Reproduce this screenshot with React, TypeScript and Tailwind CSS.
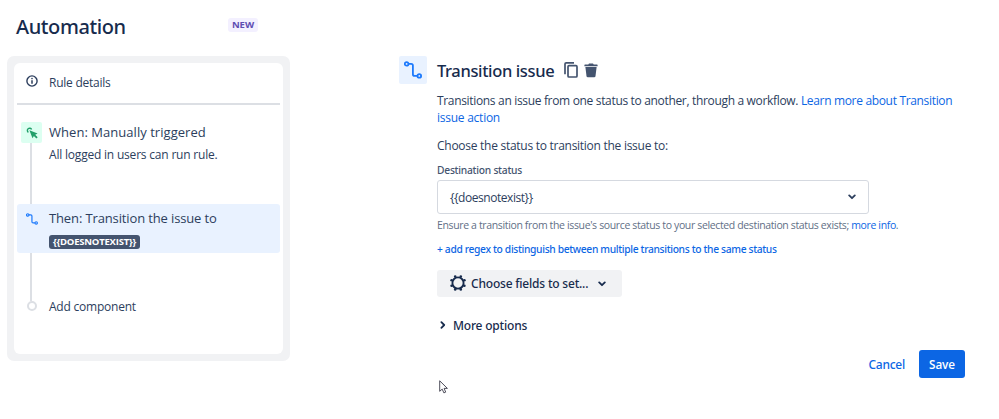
import React from 'react';

function TransitionIcon({ className }: { className: string }) {
  return (
    <svg viewBox="0 0 18 18" fill="none" stroke="#1d7afc" strokeWidth="1.8" className={className}>
      <circle cx="2.6" cy="2.9" r="1.8" />
      <path d="M4.4 2.9H7.2Q8.9 2.9 8.9 4.6V13.2Q8.9 14.9 10.6 14.9H13.4" />
      <circle cx="15.3" cy="14.9" r="1.8" />
    </svg>
  );
}

function Chevron({ className }: { className: string }) {
  return (
    <svg viewBox="0 0 8 6" fill="none" stroke="currentColor" strokeWidth="1.8" strokeLinecap="round" strokeLinejoin="round" className={className}>
      <path d="M1.2 1.4L4 4.2L6.8 1.4" />
    </svg>
  );
}

function RulePanel() {
  return (
    <div className="w-[283px] h-[305px] ml-[7px] rounded-[7px] bg-[#f1f2f4] p-[7px]">
      <div className="h-full rounded-[6px] bg-white px-[3px]">
        {/* Rule details */}
        <div className="flex h-[42px] items-center border-b-2 border-[#dcdfe4] pl-[9px]">
          <svg viewBox="0 0 12 12" className="mt-[-4px] h-3 w-3" fill="none" stroke="#2c3e5d">
            <circle cx="6" cy="6" r="5.1" strokeWidth="1.4" />
            <path d="M6 5.3V8.7" strokeWidth="1.5" />
            <circle cx="6" cy="3.6" r="0.8" fill="#2c3e5d" stroke="none" />
          </svg>
          <span className="ml-[11px] mt-[-1px] text-[12px] tracking-[-0.24px]">Rule details</span>
        </div>

        {/* Trigger */}
        <div className="flex h-[99px] pl-1 pt-[17px]">
          <div className="flex w-[21px] flex-col">
            <div className="flex h-[21px] w-[21px] shrink-0 items-center justify-center rounded-[2px] bg-[#dcfff1]">
              <svg viewBox="0 0 12 12" className="h-3 w-3">
                <path d="M2.4 5.3A2.2 2.2 0 1 1 5.6 2.6" fill="none" stroke="#22a06b" strokeWidth="1.4" />
                <path d="M3.4 3.3L11.6 6.4L9.2 7.7L11.7 10.2L10.4 11.5L7.9 9L6.5 11.3Z" fill="#22a06b" />
              </svg>
            </div>
            <div className="ml-[9px] w-[2px] flex-1 bg-[#dcdfe4]" />
          </div>
          <div className="ml-[7px] whitespace-nowrap">
            <div className="h-5 text-[13px] leading-5 tracking-[0.04px]">When: Manually triggered</div>
            <div className="mt-[2px] h-5 text-[12px] leading-[21px] tracking-[-0.2px]">All logged in users can run rule.</div>
          </div>
        </div>

        {/* Selected action */}
        <div className="flex h-[49px] rounded-[3px] bg-[#e9f2ff] pl-[9px]">
          <TransitionIcon className="mt-[9px] h-3 w-3" />
          <div className="ml-[11px] whitespace-nowrap">
            <div className="mt-1 h-5 text-[13px] leading-5 tracking-[-0.13px]">Then: Transition the issue to</div>
            <div className="mt-[7px] flex h-[14px] w-[91px] items-center justify-center rounded-[3px] bg-[#44546f] text-[9.5px] font-bold leading-[14px] tracking-[-0.2px] text-white">{'{{DOESNOTEXIST}}'}</div>
          </div>
        </div>

        {/* Add component */}
        <div className="flex pl-[9px]">
          <div className="flex w-3 flex-col">
            <div className="ml-1 h-[48px] w-[2px] bg-[#dcdfe4]" />
            <div className="ml-[1px] h-[10px] w-[10px] rounded-full border-2 border-[#dcdfe4]" />
          </div>
          <span className="ml-[11px] mt-[44px] text-[12px] leading-5 tracking-[-0.22px]">Add component</span>
        </div>
      </div>
    </div>
  );
}

function ActionForm() {
  return (
    <div className="ml-[109px] flex">
      <div className="flex h-7 w-7 items-center justify-center rounded-[2px] bg-[#e9f2ff]">
        <TransitionIcon className="h-[18px] w-[18px]" />
      </div>
      <div className="ml-[10px] w-[528px] whitespace-nowrap">
        <div className="flex h-7 items-center text-[#172b4d]">
          <h2 className="w-[117px] pt-[2px] font-['Noto_Sans',sans-serif] text-[16.5px] font-medium tracking-[-0.37px]">Transition issue</h2>
          <svg viewBox="0 0 14 16" fill="none" stroke="#44546f" strokeWidth="1.7" className="ml-[10px] h-4 w-[14px]">
            <path d="M1 12.2V2.1Q1 0.9 2.2 0.9H10" />
            <rect x="4" y="3.7" width="9" height="11.3" rx="1" />
          </svg>
          <svg viewBox="0 0 14 15" fill="#44546f" className="ml-[6px] h-[15px] w-[14px]">
            <path d="M1 1.4H4.3L5 0.5H9L9.7 1.4H13Q13.6 1.4 13.6 2V3.2H0.4V2Q0.4 1.4 1 1.4Z" />
            <path d="M1.4 4H12.6L11.5 13.2Q11.3 14.3 10.2 14.3H3.8Q2.7 14.3 2.5 13.2Z" />
          </svg>
        </div>
        <p className="mt-2 text-[12px] leading-[17.3px] tracking-[-0.33px]">
          Transitions an issue from one status to another, through a workflow. <a className="text-[#0c66e4]">Learn more about Transition<br /><span className="tracking-[-0.25px]">issue action</span></a>
        </p>
        <p className="mt-[10px] text-[12px] leading-[18px] tracking-[-0.27px]">Choose the status to transition the issue to:</p>
        <label className="mt-[7px] block font-['Noto_Sans',sans-serif] text-[10.25px] font-medium leading-4 tracking-[-0.25px] text-[#44546f]">Destination status</label>
        <div className="mt-[2px] flex h-[34px] w-[432px] items-center justify-between rounded-[3px] border-[1.5px] border-[#d5d9e0] pl-3 pr-3">
          <span className="pt-[2px] text-[12px] tracking-[-0.45px]">{'{{doesnotexist}}'}</span>
          <Chevron className="mt-[1px] h-[6px] w-2" />
        </div>
        <p className="mt-[3px] text-[10.5px] leading-4 tracking-[-0.36px] text-[#626f86]">
          Ensure a transition from the issue's source status to your selected destination status exists; <a className="text-[#0c66e4]">more info</a>.
        </p>
        <p className="mt-2 font-['Noto_Sans',sans-serif] text-[10.25px] font-medium leading-4 tracking-[-0.335px] text-[#0c66e4]">+ add regex to distinguish between multiple transitions to the same status</p>
        <button className="mt-[13px] flex h-[27px] w-[185px] items-center rounded-[3px] bg-[#f1f2f4] pl-[13px] font-['Noto_Sans',sans-serif] text-[12px] font-medium tracking-[-0.2px] text-[#172b4d]">
          <svg viewBox="0 0 16 16" className="h-4 w-4" fill="#172b4d">
            <circle cx="8" cy="8" r="5.6" fill="none" stroke="#172b4d" strokeWidth="1.9" />
            <circle cx="5.2" cy="1.6" r="1.3" />
            <circle cx="10.8" cy="1.6" r="1.3" />
            <circle cx="14.4" cy="5.2" r="1.3" />
            <circle cx="14.4" cy="10.8" r="1.3" />
            <circle cx="10.8" cy="14.4" r="1.3" />
            <circle cx="5.2" cy="14.4" r="1.3" />
            <circle cx="1.6" cy="10.8" r="1.3" />
            <circle cx="1.6" cy="5.2" r="1.3" />
          </svg>
          <span className="ml-[5px] w-[117px] pt-[2px] text-left">Choose fields to set...</span>
          <Chevron className="ml-[10px] mt-[1px] h-[6px] w-2" />
        </button>
        <button className="mt-[18px] flex h-5 items-center font-['Noto_Sans',sans-serif] text-[12px] font-medium tracking-[-0.2px] text-[#172b4d]">
          <Chevron className="ml-[2px] h-[6px] w-2 -rotate-90" />
          <span className="ml-[6px] pt-[2px]">More options</span>
        </button>
        <div className="mt-[15px] flex h-7 items-center justify-end">
          <button className="mr-[14px] pt-[2px] font-['Noto_Sans',sans-serif] text-[12px] font-medium tracking-[-0.25px] text-[#0c66e4]">Cancel</button>
          <button className="h-7 w-[46px] rounded-[3px] bg-[#0c66e4] pt-[2px] text-[11.75px] font-semibold tracking-[-0.1px] text-white">Save</button>
        </div>
        <svg viewBox="0 0 10 14" className="ml-[2px] mt-[2px] h-[14px] w-[10px]" fill="#fff" stroke="#3b3b4a" strokeWidth="0.9">
          <path d="M0.7 0.8V11.3L3.2 9.1L4.9 12.9L6.7 12.1L5.1 8.4H8.4Z" />
        </svg>
      </div>
    </div>
  );
}

export default function App() {
  return (
    <div className="h-[419px] w-[999px] overflow-hidden bg-white font-['Open_Sans',sans-serif] text-[#2c3e5d]">
      <div className="flex h-[56px] items-start pl-4">
        <h1 className="mt-[12px] w-[212px] font-['Noto_Sans',sans-serif] text-[20px] font-medium leading-[30px] tracking-[-0.4px] text-[#172b4d]">Automation</h1>
        <span className="mt-[18px] flex h-[14px] w-[30px] items-center justify-center rounded-[3px] bg-[#f3f0ff] text-[9.5px] font-bold text-[#5e4db2]">NEW</span>
      </div>
      <div className="flex items-start">
        <RulePanel />
        <ActionForm />
      </div>
    </div>
  );
}
